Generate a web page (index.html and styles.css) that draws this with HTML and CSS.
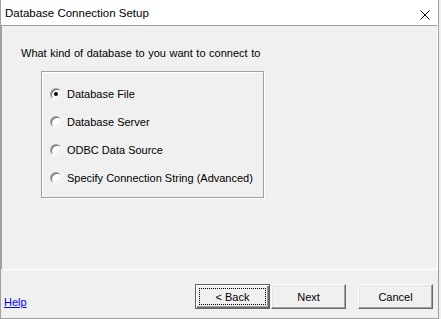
FILE: index.html
```html
<!DOCTYPE html>
<html lang="en">
<head>
    <meta charset="UTF-8">
    <title>Database Connection Setup</title>
    <link rel="stylesheet" href="styles.css">
</head>
<body>
    <div class="window">
        <div class="titlebar">
            <span class="title">Database Connection Setup</span>
            <svg class="close" width="10" height="10" viewBox="0 0 10 10">
                <path d="M0.5 0.5 L9.5 9.5 M9.5 0.5 L0.5 9.5" stroke="#000" stroke-width="1" fill="none"/>
            </svg>
        </div>

        <div class="panel">
            <p class="prompt">What kind of database to you want to connect to</p>
            <div class="group">
                <label class="option"><span class="radio checked"></span>Database File</label>
                <label class="option"><span class="radio"></span>Database Server</label>
                <label class="option"><span class="radio"></span>ODBC Data Source</label>
                <label class="option"><span class="radio"></span>Specify Connection String (Advanced)</label>
            </div>
        </div>

        <div class="footer">
            <a href="#" class="help">Help</a>
            <div class="buttons">
                <button class="btn btn-default">&lt; Back</button>
                <button class="btn">Next</button>
                <button class="btn btn-cancel">Cancel</button>
            </div>
        </div>
    </div>
</body>
</html>
```

FILE: styles.css
```css
* {
    margin: 0;
    padding: 0;
    box-sizing: border-box;
}
body {
    background: #f0f0f0;
    font-family: 'Liberation Sans', Arial, sans-serif;
    font-size: 11px;
    color: #000;
}
.window {
    width: 439px;
    height: 319px;
    display: flex;
    flex-direction: column;
    border: 1px solid #a0a0a0;
    border-top: none;
    background: #f0f0f0;
}
.titlebar {
    height: 25px;
    flex: none;
    background: #fff;
    display: flex;
    align-items: center;
    justify-content: space-between;
    padding: 0 8px 0 4px;
}
.title {
    font-size: 11.5px;
    line-height: 16px;
    padding-top: 1px;
}
.close {
    display: block;
    margin-top: 4px;
}
.panel {
    height: 245px;
    flex: none;
    border: 1px solid;
    border-color: #a0a0a0 #fff #fff #a0a0a0;
    padding: 21px 0 0 19px;
}
.prompt {
    line-height: 13px;
    word-spacing: 0.5px;
}
.group {
    width: 223px;
    margin: 11px 0 0 20px;
    padding: 8px 0 5px 8px;
    border: 1px solid #a0a0a0;
    box-shadow: inset 1px 1px #fff, 1px 1px #fff;
}
.option {
    display: flex;
    align-items: center;
    height: 28px;
    gap: 5px;
}
.radio {
    position: relative;
    width: 12px;
    height: 12px;
    border-radius: 50%;
    border: 1px solid;
    border-color: #a0a0a0 #fff #fff #a0a0a0;
    background: #fff;
    box-shadow: inset 1px 1px #696969, inset -1px -1px #e3e3e3;
}
.radio.checked::after {
    content: "";
    position: absolute;
    left: 3px;
    top: 3px;
    width: 4px;
    height: 4px;
    border-radius: 50%;
    background: #000;
}
.footer {
    flex: 1;
    display: flex;
    align-items: flex-start;
    padding: 14px 5px 0 3px;
}
.help {
    margin-top: 12px;
    color: #0000ff;
    line-height: 13px;
}
.buttons {
    margin-left: auto;
    display: flex;
}
.btn {
    position: relative;
    width: 75px;
    height: 25px;
    font-family: inherit;
    font-size: 11px;
    color: #000;
    background: #f0f0f0;
    border: 1px solid;
    border-color: #fff #696969 #696969 #fff;
    box-shadow: inset -1px -1px #a0a0a0, inset 1px 1px #e3e3e3;
}
.btn + .btn {
    margin-left: 1px;
}
.btn-cancel {
    margin-left: 12px !important;
}
.btn-default {
    border: 1px solid #646464;
    box-shadow: inset 1px 1px #fff, inset -1px -1px #696969, inset -2px -2px #a0a0a0;
}
.btn-default::after {
    content: "";
    position: absolute;
    left: 3px;
    top: 3px;
    right: 3px;
    bottom: 3px;
    border: 1px dotted #000;
}
```
